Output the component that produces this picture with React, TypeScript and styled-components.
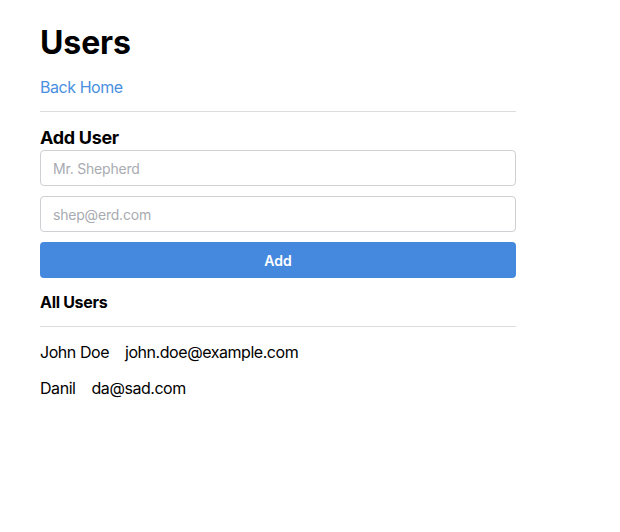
import React from 'react';
import styled, {createGlobalStyle} from 'styled-components';

const GlobalStyle = createGlobalStyle`
  body {
    margin: 0;
    background: #fff;
    font-family: Inter, "Noto Sans", sans-serif;
    color: #000;
  }
`;

const users = [
  {name: 'John Doe', email: 'john.doe@example.com'},
  {name: 'Danil', email: 'da@sad.com'},
];

const App = () => (
  <>
    <GlobalStyle />
    <Page>
      <Title>Users</Title>
      <BackLink href="#">Back Home</BackLink>
      <Divider />
      <SectionTitle>Add User</SectionTitle>
      <Form onSubmit={e => e.preventDefault()}>
        <Input placeholder="Mr. Shepherd" />
        <Input placeholder="shep@erd.com" />
        <AddButton type="submit">Add</AddButton>
      </Form>
      <ListTitle>All Users</ListTitle>
      <Divider $gap={14} />
      <UserList>
        {users.map(user => (
          <UserRow key={user.email}>
            <span>{user.name}</span>
            <span>{user.email}</span>
          </UserRow>
        ))}
      </UserList>
    </Page>
  </>
);

const Page = styled.div`
  width: 476px;
  margin-left: 40px;
  padding-top: 23px;
  display: flex;
  flex-direction: column;
`;

const Title = styled.h1`
  margin: 0;
  font-size: 32px;
  font-weight: 700;
  line-height: 40px;
  letter-spacing: -0.1px;
`;

const BackLink = styled.a`
  margin-top: 12px;
  font-size: 16px;
  line-height: 24px;
  letter-spacing: -0.45px;
  color: #4a8fdf;
  text-decoration: none;
  align-self: flex-start;
`;

const Divider = styled.hr<{$gap?: number}>`
  width: 100%;
  margin: ${p => p.$gap ?? 12}px 0 0;
  border: none;
  border-top: 1px solid #dcdcdf;
`;

const SectionTitle = styled.h2`
  margin: 14px 0 0;
  font-size: 18px;
  font-weight: 700;
  line-height: 24px;
  letter-spacing: -0.3px;
`;

const Form = styled.form`
  display: flex;
  flex-direction: column;
  gap: 10px;
`;

const Input = styled.input`
  box-sizing: border-box;
  height: 36px;
  padding: 0 12px;
  border: 1px solid #cfcfd4;
  border-radius: 4px;
  font-family: inherit;
  font-size: 14px;
  letter-spacing: -0.2px;
  outline: none;
  &::placeholder {
    color: #a9abb1;
  }
`;

const AddButton = styled.button`
  height: 36px;
  border: none;
  border-radius: 4px;
  background: #4589df;
  color: #fff;
  font-family: inherit;
  font-size: 14px;
  font-weight: 600;
  cursor: pointer;
`;

const ListTitle = styled.h3`
  margin: 14px 0 0;
  font-size: 16px;
  font-weight: 700;
  line-height: 20px;
  letter-spacing: -0.3px;
`;

const UserList = styled.ul`
  list-style: none;
  margin: 13px 0 0;
  padding: 0;
  display: flex;
  flex-direction: column;
  gap: 12px;
`;

const UserRow = styled.li`
  display: flex;
  gap: 16px;
  font-size: 16px;
  line-height: 24px;
  letter-spacing: -0.45px;
`;

export default App;
